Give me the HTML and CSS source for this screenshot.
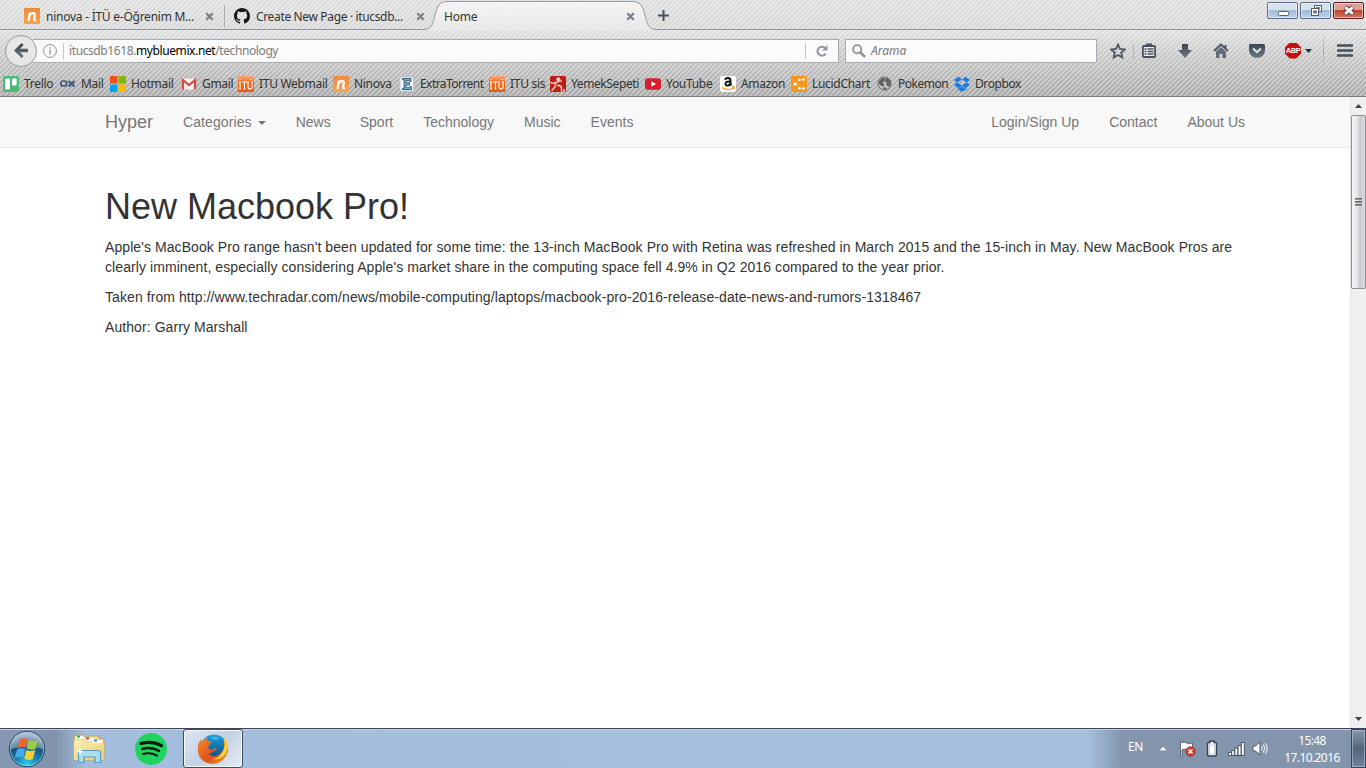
FILE: index.html
```html
<!DOCTYPE html>
<html lang="en">
<head>
<meta charset="utf-8">
<title>Home</title>
<link rel="stylesheet" href="styles.css">
</head>
<body>
<svg class="defs" width="0" height="0">
  <defs>
    <linearGradient id="tabFill" x1="0" y1="0" x2="0" y2="1"><stop offset="0" stop-color="#fafafa" stop-opacity=".75"/><stop offset="1" stop-color="#f1f1f1" stop-opacity=".6"/></linearGradient>
    <linearGradient id="orange" x1="0" y1="0" x2="0" y2="1"><stop offset="0" stop-color="#f08b3c"/><stop offset="1" stop-color="#f9a34c"/></linearGradient>
    <linearGradient id="itu" x1="0" y1="0" x2="0" y2="1"><stop offset="0" stop-color="#f9a87c"/><stop offset=".4" stop-color="#f06a1c"/><stop offset="1" stop-color="#e8590c"/></linearGradient>
    <linearGradient id="slate" x1="0" y1="0" x2="0" y2="1"><stop offset="0" stop-color="#3b454f"/><stop offset="1" stop-color="#6c7986"/></linearGradient>
    <radialGradient id="orb" cx=".5" cy=".95" r=".9"><stop offset="0" stop-color="#2fd3f4"/><stop offset=".35" stop-color="#1583b5"/><stop offset=".65" stop-color="#1c4f7c"/><stop offset="1" stop-color="#9fb4c8"/></radialGradient>
    <linearGradient id="folder" x1="0" y1="0" x2="1" y2="1"><stop offset="0" stop-color="#fbf0b4"/><stop offset="1" stop-color="#ecca68"/></linearGradient>
    <linearGradient id="globe" x1="0" y1="0" x2="0" y2="1"><stop offset="0" stop-color="#1ba1d8"/><stop offset="1" stop-color="#123c80"/></linearGradient>
    <linearGradient id="fox" x1="0" y1="0" x2="1" y2="1"><stop offset="0" stop-color="#f6892a"/><stop offset=".6" stop-color="#e0501b"/><stop offset="1" stop-color="#f8a51c"/></linearGradient>
    <symbol id="i-ninova" viewBox="0 0 16 16"><rect width="16" height="16" fill="url(#orange)"/><path d="M4.500 13 6 4.500M5.400 7.500C8 4 11 4.500 10.800 7L10 11.200Q10 12.600 12 12" fill="none" stroke="#fff" stroke-width="2.300"/></symbol>
    <symbol id="i-itu" viewBox="0 0 16 16"><rect width="16" height="16" fill="url(#itu)"/><path d="M2 6v7M1 6h2M1 13h2M4 6h5M6.500 6v7M5.500 13h2M10 6v5q0 2 2 2t2-2V6M9.500 6h1.500M13 6h2M11.500 3.500h.8M13.500 3.500h.8M1.700 3.500h.8" fill="none" stroke="#fff" stroke-width="1.100"/></symbol>
    <symbol id="i-x" viewBox="0 0 9 9"><path d="M1.300 1.300 7.700 7.700M7.700 1.300 1.300 7.700" stroke="#77818b" stroke-width="2.300"/></symbol>
  </defs>
</svg>

<header class="chrome">
  <div class="tabs">
    <div class="tab tab-one">
      <svg class="fav" width="16" height="16"><use href="#i-ninova"/></svg>
      <span class="tab-label">ninova - İTÜ e-Öğrenim M...</span>
      <svg class="close" width="9" height="9"><use href="#i-x"/></svg>
    </div>
    <div class="tab tab-two">
      <svg class="fav" width="16" height="16" viewBox="0 0 16 16"><path fill="#16191c" d="M8 0C3.580 0 0 3.580 0 8c0 3.540 2.290 6.530 5.470 7.590.4.070.55-.17.55-.38v-1.490c-2.010.37-2.530-.49-2.690-.94-.09-.23-.48-.94-.82-1.130-.28-.15-.68-.52-.01-.53.63-.01 1.080.58 1.230.82.720 1.210 1.870.87 2.330.66.070-.52.28-.87.51-1.070-1.780-.2-3.640-.89-3.640-3.950 0-.87.31-1.590.82-2.150-.08-.2-.36-1.020.08-2.120 0 0 .67-.21 2.200.82a7.600 7.600 0 0 1 4 0c1.530-1.040 2.200-.82 2.200-.82.44 1.100.16 1.920.08 2.120.51.560.82 1.270.82 2.150 0 3.070-1.870 3.750-3.650 3.950.29.250.54.730.54 1.480v2.200c0 .21.15.46.55.38A8 8 0 0 0 16 8c0-4.420-3.580-8-8-8z"/></svg>
      <span class="tab-label">Create New Page · itucsdb...</span>
      <svg class="close" width="9" height="9"><use href="#i-x"/></svg>
    </div>
    <div class="tab tab-active">
      <svg class="tab-shape" width="238" height="30" viewBox="0 0 238 30"><path d="M0 29.500H4C12 29.500 13 23 15 15 17 6 20 1.500 27 1.500H212C220 1.500 223 6 225 15 227 23 228 29.500 236 29.500H238V30H0Z" fill="url(#tabFill)"/><path d="M0 29.500H4C12 29.500 13 23 15 15 17 6 20 1.500 27 1.500H212C220 1.500 223 6 225 15 227 23 228 29.500 236 29.500H238" fill="none" stroke="#959a9f"/></svg>
      <span class="tab-label">Home</span>
      <svg class="close" width="9" height="9"><use href="#i-x"/></svg>
    </div>
    <div class="tab-rest">
      <svg width="11" height="11" viewBox="0 0 11 11"><path d="M5.500 0v11M0 5.500h11" stroke="#47535f" stroke-width="2"/></svg>
      <div class="window-buttons">
        <span class="wb"><svg width="30" height="17" viewBox="0 0 30 17"><rect x="10.500" y="9.500" width="10" height="4" rx="1" fill="#fff" stroke="#56606c"/></svg></span>
        <span class="wb"><svg width="30" height="17" viewBox="0 0 30 17"><rect x="13.500" y="3.500" width="7" height="6" fill="#f4f7fa" stroke="#56606c"/><rect x="15.500" y="5.500" width="3" height="2" fill="#a0bbd6" stroke="#56606c" stroke-width=".7"/><rect x="10.500" y="6.500" width="7" height="7" fill="#fff" stroke="#56606c"/><rect x="12.800" y="9" width="2.500" height="2" fill="#6b8db0" stroke="#56606c" stroke-width=".9"/></svg></span>
        <span class="wb wb-close"><svg width="30" height="17" viewBox="0 0 30 17"><path d="m11 5 8 7m0-7-8 7" stroke="#684047" stroke-width="4.800"/><path d="m11.200 5.200 7.600 6.600m0-6.600-7.600 6.600" stroke="#fff" stroke-width="2.800"/></svg></span>
      </div>
    </div>
  </div>

  <div class="toolbar">
    <div class="back"><svg width="14" height="15" viewBox="0 0 14 15"><path d="M14 5.800H6L9.700 2.100 7.600 0 0 7.500 7.600 15 9.700 12.900 6 9.200H14Z" fill="url(#slate)"/></svg></div>
    <div class="urlbar">
      <svg class="info" width="14" height="14" viewBox="0 0 14 14"><circle cx="7" cy="7" r="6.400" fill="none" stroke="#939393"/><path d="M7 6v4.500M7 3.300v1.500" stroke="#939393" stroke-width="1.400"/></svg>
      <span class="vline"></span>
      <span class="url">itucsdb1618.<b>mybluemix.net</b>/technology</span>
      <span class="vline vline-end"></span>
      <svg width="12" height="12" viewBox="0 0 12 12"><path d="M9.800 8.500A4.500 4.500 0 1 1 9 2.800" fill="none" stroke="#8c99a5" stroke-width="2"/><path d="M11.500 0v5.500H6Z" fill="#8c99a5"/></svg>
    </div>
    <div class="search">
      <svg width="14" height="14" viewBox="0 0 14 14"><circle cx="5.200" cy="5.200" r="4.100" fill="none" stroke="#929292" stroke-width="1.900"/><path d="m8.300 8.300 4.700 4.700" stroke="#929292" stroke-width="2.500"/></svg>
      <span>Arama</span>
    </div>
    <div class="tools">
      <svg class="t-star" width="16" height="16" viewBox="0 0 16 16"><path d="m8 1.500 2 4.500 4.900.5-3.700 3.200 1.100 4.800L8 12l-4.300 2.500 1.100-4.800L1.100 6.500 6 6Z" fill="none" stroke="#4c5762" stroke-width="1.800"/></svg>
      <span class="vline tool-line"></span>
      <svg class="t-list" width="14" height="15" viewBox="0 0 14 15"><path d="M4.500 3V1h5v2" fill="#46515c" stroke="#46515c" stroke-width="1.200"/><rect x=".9" y="3" width="12.200" height="11" rx="1" fill="#eee" stroke="#46515c" stroke-width="1.800"/><path d="M2.500 6h2M5.500 6H11.500M2.500 8.500h2M5.500 8.500H11.500M2.500 11h2M5.500 11H11.500" stroke="#46515c" stroke-width="1.300"/></svg>
      <svg class="t-down" width="14" height="14" viewBox="0 0 14 14"><path d="M4 0h6v6h4l-7 8-7-8h4Z" fill="url(#slate)"/></svg>
      <svg class="t-home" width="16" height="15" viewBox="0 0 16 15"><path d="m1 8 7-6.500L15 8M12.500 2v3" fill="none" stroke="#46515c" stroke-width="1.800"/><path d="M3 8.600 8 4l5 4.600V15H9.500v-4h-3v4H3Z" fill="#626e79"/></svg>
      <svg class="t-pocket" width="16" height="14" viewBox="0 0 16 14"><path d="M1.500 0h13Q16 0 16 1.500V6A8 8 0 0 1 0 6V1.500Q0 0 1.500 0Z" fill="url(#slate)"/><path d="m4 4.500 4 3.800 4-3.800" fill="none" stroke="#e5e7e9" stroke-width="1.900"/></svg>
      <span class="abp">ABP</span>
      <svg class="t-caret" width="7" height="4" viewBox="0 0 7 4"><path d="M0 0h7L3.500 4Z" fill="#26313b"/></svg>
      <span class="tool-divider"></span>
      <svg class="t-menu" width="16" height="13" viewBox="0 0 16 13"><path d="M0 1.500h16M0 6.500h16M0 11.500h16" stroke="#46515c" stroke-width="2.600" stroke-linecap="butt"/></svg>
    </div>
  </div>

  <nav class="bookmarks">
    <a class="bm bm-trello"><svg width="16" height="16" viewBox="0 0 16 16"><rect width="16" height="16" rx="2" fill="#4bb978"/><rect x="2.300" y="2.500" width="4.600" height="11" rx=".7" fill="#fff"/><rect x="9" y="2.500" width="4.600" height="7" rx=".7" fill="#fff"/></svg><span>Trello</span></a>
    <a class="bm bm-mail"><svg width="16" height="16" viewBox="0 0 16 16"><rect x="1" y="5" width="5.600" height="5" rx="2" fill="none" stroke="#3a577c" stroke-width="1.700"/><path d="m8.500 5 6 5.500m0-5.500-6 5.500" stroke="#3a577c" stroke-width="1.900"/></svg><span>Mail</span></a>
    <a class="bm bm-hotmail"><svg width="16" height="16" viewBox="0 0 16 16"><path fill="#f25022" d="M0 0h7.500v7.500H0z"/><path fill="#7fba00" d="M8.500 0H16v7.500H8.500z"/><path fill="#00a4ef" d="M0 8.500h7.500V16H0z"/><path fill="#ffb900" d="M8.500 8.500H16V16H8.500z"/></svg><span>Hotmail</span></a>
    <a class="bm bm-gmail"><svg width="16" height="16" viewBox="0 0 16 16"><rect x="1" y="2.500" width="14" height="11" rx="1" fill="#f4f1f0"/><path d="M2 13.500V4l6 5 6-5v9.500" fill="none" stroke="#d54b3d" stroke-width="2.200"/></svg><span>Gmail</span></a>
    <a class="bm bm-webmail"><svg width="16" height="16"><use href="#i-itu"/></svg><span>ITU Webmail</span></a>
    <a class="bm bm-ninova"><svg width="16" height="16"><use href="#i-ninova"/></svg><span>Ninova</span></a>
    <a class="bm bm-extra"><svg width="16" height="16" viewBox="0 0 16 16"><rect x="1" y="1" width="13.500" height="14" fill="#f8fafb" stroke="#b9c5cd"/><path d="M3.500 2.500H12v3h-1.500L10 4.700H7v2.100h3.500v2.300H7v2.600h3.500l.5-1.200h1.500v3h-9v-1H5V3.700H3.500Z" fill="#6db4d8" stroke="#26485e" stroke-width=".8"/></svg><span>ExtraTorrent</span></a>
    <a class="bm bm-sis"><svg width="16" height="16"><use href="#i-itu"/></svg><span>ITU sis</span></a>
    <a class="bm bm-yemek"><svg width="16" height="16" viewBox="0 0 16 16"><rect width="16" height="16" rx="1.500" fill="#c01d12"/><circle cx="8.300" cy="3.200" r="2" fill="#e8d6d0"/><path d="M0 6.500Q4 8 6 6.500T12 5M5.500 7.500Q6 11 1.500 14.500M7 9.500q4-.5 4.500 2.500V16M14 13v3" fill="none" stroke="#e3c6c0" stroke-width="1.600"/></svg><span>YemekSepeti</span></a>
    <a class="bm bm-youtube"><svg width="16" height="16" viewBox="0 0 16 16"><rect y="2.300" width="16" height="11.400" rx="2.800" fill="#d3222a"/><path d="m6.300 5.300 4.700 2.700-4.700 2.700Z" fill="#fff"/></svg><span>YouTube</span></a>
    <a class="bm bm-amazon"><svg width="16" height="16" viewBox="0 0 16 16"><rect width="16" height="16" rx="2" fill="#fff"/><path d="M5 3.800Q5.500 2 8 2q2.500 0 2.500 2.500V8l1 1.500M10 5.500Q5.500 5.300 5.500 7.700T8 9.500q2-.3 2.300-2.500" fill="none" stroke="#111" stroke-width="1.900"/><path d="M2 11.500q6 4 11.500.500M12 11h2v2" fill="none" stroke="#f59a22" stroke-width="1.400"/></svg><span>Amazon</span></a>
    <a class="bm bm-lucid"><svg width="16" height="16" viewBox="0 0 16 16"><rect width="16" height="16" rx="1" fill="#f4971d"/><path d="M12 3.500H8.500L4 8l4.500 4.500H12M4 8h4" fill="none" stroke="#f8b660" stroke-width="1"/><g fill="#fff"><circle cx="12.500" cy="3.500" r="1.300"/><circle cx="8.500" cy="3.800" r="1.300"/><circle cx="4" cy="8" r="1.600"/><circle cx="8.500" cy="12.200" r="1.300"/><circle cx="12.500" cy="12.500" r="1.300"/></g></svg><span>LucidChart</span></a>
    <a class="bm bm-pokemon"><svg width="16" height="16" viewBox="0 0 16 16"><circle cx="7.500" cy="7.500" r="6.500" fill="#c5c7c8" stroke="#6c6f71"/><path d="m1.500 5.500 4-4 3 1-1 3-2 1 2 2-1 2-3-1-2-2ZM9 1.500l4 2.500 1 4-2 3-3-2 1-2-2-1ZM6 11.500h3l1 2-3 .5Z" fill="#606466"/></svg><span>Pokemon</span></a>
    <a class="bm bm-dropbox"><svg width="16" height="16" viewBox="0 0 16 16"><path d="m4.700.8 3.300 2.700-4.800 3L0 3.900Zm6.600 0L16 3.900l-3.200 2.600-4.800-3ZM3.200 6.500 8 9.400l-3.300 2.800L0 9.100Zm9.600 0L16 9.100l-4.700 3.100L8 9.400ZM3.300 12l1.400 1L8 10.300l3.300 2.700 1.400-1v1.200L8 15.700l-4.700-2.500Z" fill="#147ae5"/></svg><span>Dropbox</span></a>
  </nav>
</header>

<div class="viewport">
  <div class="page">
    <nav class="navbar">
      <a class="brand">Hyper</a>
      <div class="nav-left"><a>Categories <i class="caret"></i></a><a>News</a><a>Sport</a><a>Technology</a><a>Music</a><a>Events</a></div>
      <div class="nav-right"><a>Login/Sign Up</a><a>Contact</a><a>About Us</a></div>
    </nav>
    <main>
      <h1>New Macbook Pro!</h1>
      <p>Apple's MacBook Pro range hasn't been updated for some time: the 13-inch MacBook Pro with Retina was refreshed in March 2015 and the 15-inch in May. New MacBook Pros are clearly imminent, especially considering Apple's market share in the computing space fell 4.9% in Q2 2016 compared to the year prior.</p>
      <p>Taken from http://www.techradar.com/news/mobile-computing/laptops/macbook-pro-2016-release-date-news-and-rumors-1318467</p>
      <p>Author: Garry Marshall</p>
    </main>
  </div>
  <div class="scrollbar">
    <span class="arrow"><svg width="7" height="4" viewBox="0 0 7 4"><path d="M0 4h7L3.500 0Z" fill="#444"/></svg></span>
    <div class="thumb"><i></i><i></i><i></i></div>
    <span class="arrow arrow-down"><svg width="7" height="4" viewBox="0 0 7 4"><path d="M0 0h7L3.500 4Z" fill="#444"/></svg></span>
  </div>
</div>

<footer class="taskbar">
  <svg class="start" width="38" height="38" viewBox="0 0 38 38"><circle cx="19" cy="19" r="17.700" fill="url(#orb)" stroke="#31495f"/><circle cx="19" cy="19" r="16.600" fill="none" stroke="#a7dbea" stroke-opacity=".7"/><path d="M3 19Q2 4 19 3 36 4 35 19 19 14 3 19Z" fill="#dfe9f2" opacity=".35"/><path d="M12 9.500Q16 7 19.500 9.500l-2 8.500Q14 16 9.500 18Z" fill="#f0652a"/><path d="M20.700 10Q25 12.500 30 10l-2.500 9Q23 20.500 18.800 18.500Z" fill="#9dcb45"/><path d="M9.200 19.300Q13.500 17.200 17.200 19.500l-2.200 8.500Q11.500 26 6.800 28Z" fill="#4aa9e9"/><path d="M18.400 20Q22 22 27.200 20L24.800 29Q20 31 16.200 28.500Z" fill="#fdcf37"/></svg>
  <svg class="explorer" width="34" height="32" viewBox="0 0 34 32"><path d="M2 4 4 2h8l1 2h4l1-1h8l1 3h5v21H2Z" fill="#f5e298" stroke="#c8a64b"/><path d="M4 3h7v3H4ZM13 5h9v3h-9ZM21 7h9v3h-9Z" fill="#fff"/><path d="M5 2.500h3v2H5Z" fill="#18b33c"/><path d="M14 4.500h3v2h-3Z" fill="#d84b2b"/><path d="M22 6.500h3v2h-3Z" fill="#348cd0"/><path d="M2 8h10l1 2h8l1 1h10v16H2Z" fill="url(#folder)"/><path d="M6.500 29.500V20q0-2.500 2.500-2.500h17q2.500 0 2.500 2.500v9.500h-5.500V24h-11v5.500Z" fill="#a9def0" stroke="#559cc4" stroke-width="1.200"/><path d="m8 14 1 3.500 3 1-3 1-1 3.500-1-3.500-3-1 3-1Z" fill="#f5ffff"/></svg>
  <svg class="spotify" width="32" height="32" viewBox="0 0 32 32"><circle cx="16" cy="16" r="16" fill="#1ed45f"/><g fill="none" stroke="#09150d" stroke-linecap="round"><path d="M6 10.500q11-3 20.500 2.200" stroke-width="3.100"/><path d="M7.300 16q9-2.500 16.700 1.900" stroke-width="2.500"/><path d="M8 21q7.500-2 14 1.600" stroke-width="2.100"/></g></svg>
  <div class="task-active"><svg width="32" height="32" viewBox="0 0 32 32"><circle cx="17" cy="15" r="13.500" fill="url(#globe)"/><path d="M27 5q5 6 4 13-3 12-15 13Q3 30 1 19 0 11 4 6l1 3q3-4 7-5-2 2-2 4h4q2 1-1 3l-2 3q1 3 4 3l4-2q2 2-2 3-3 3-6 2 5 6 12 1 6-5 3-16Z" fill="url(#fox)"/><path d="M26 4q4 10-2 17-4 5-9 5 13 2 16-11Q31 8 26 4Z" fill="#fbd13c"/><path d="M13 5q5-3 10 0l-4 2-4-1Z" fill="#53c4e8" opacity=".7"/></svg></div>
  <div class="tray">
    <span class="lang">EN</span>
    <svg class="up" width="8" height="5" viewBox="0 0 8 5"><path d="M0 4.700 4 .3l4 4.400Z" fill="#fff" stroke="#52647a" stroke-width=".4"/></svg>
    <svg class="flag" width="17" height="17" viewBox="0 0 17 17"><path d="M1.500 1v15.500H3V10q3-2 5 0 3 1.500 5.500-.5V3q-3 1.500-5.500 0-3-1.500-5-.2V1Z" fill="#fff" stroke="#4a5563" stroke-width=".8"/><circle cx="11.500" cy="11.500" r="4.800" fill="#d33b2c" stroke="#912c26" stroke-width=".6"/><path d="m9.500 9.500 4 4m0-4-4 4" stroke="#fff" stroke-width="1.500"/></svg>
    <svg class="battery" width="12" height="17" viewBox="0 0 12 17"><path d="M4 2.500V1h4v1.500h1.500l1 1V14q0 2-2 2h-5q-2 0-2-2V3.500l1-1Z" fill="#f8fbff" stroke="#374453" stroke-width="1.500"/><path d="M3.500 5h5v9h-5Z" fill="#fff" stroke="#9aa7b5" stroke-width=".5"/></svg>
    <svg class="signal" width="17" height="14" viewBox="0 0 17 14"><g fill="#fff" stroke="#3f4d5e" stroke-width=".9"><rect x=".5" y="10.500" width="3" height="3"/><rect x="3.700" y="8.500" width="3" height="5"/><rect x="6.900" y="6" width="3" height="7.500"/><rect x="10.100" y="3.500" width="3" height="10"/><rect x="13.300" y=".5" width="3" height="13"/></g></svg>
    <svg class="speaker" width="16" height="15" viewBox="0 0 16 15"><path d="M1 5h2.500L8 1v13l-4.500-4H1Z" fill="#fff" stroke="#43515f" stroke-width=".9"/><path d="M9.500 5.500q1.500 2 0 4M11.300 3.500q3 4 0 8M13.200 2q4 5.500 0 11" fill="none" stroke="#fff" stroke-width="1"/></svg>
    <div class="clock"><span>15:48</span><span>17.10.2016</span></div>
    <span class="show-desktop"></span>
  </div>
</footer>
</body>
</html>
```
FILE: styles.css
```css
* { box-sizing: border-box; }
body { margin: 0; width: 1366px; height: 768px; overflow: hidden; display: flex; flex-direction: column; background: #fff; font-family: "Noto Sans", sans-serif; font-size: 12px; color: #333; }
svg { display: block; flex: none; }
.defs { position: absolute; }

/* Browser chrome */
.chrome { height: 97px; flex: none; border-bottom: 1px solid #7f7f7f; background: repeating-linear-gradient(135deg, rgba(255,255,255,.38) 0 1px, transparent 1.5px 3.1px, rgba(255,255,255,.38) 3.535px), linear-gradient(#dedede 0, #d8d8d8 29px, #e0e0e0 30px, #d2d2d2 45px, #a9a9a9 96px); }
.tabs { display: flex; height: 30px; }
.tab { display: flex; align-items: center; height: 30px; padding-top: 3px; border-bottom: 1px solid #8f969d; white-space: nowrap; }
.tab-one { width: 225px; padding-left: 24px; background: linear-gradient(#a9abad, #a9abad) 224px 5px / 1px 22px no-repeat; }
.tab-two { width: 195px; padding-left: 9px; }
.tab-label { margin-left: 6px; width: 154px; letter-spacing: -.25px; }
.tab-two .tab-label { width: 155px; flex: none; letter-spacing: -.35px; }
.close { margin-left: 5px; }
.tab-active { position: relative; width: 238px; padding: 2px 0 0 24px; border: 0; }
.tab-shape { position: absolute; left: 0; top: 0; }
.tab-active .tab-label { position: relative; margin: 0; width: 182px; letter-spacing: -.2px; }
.tab-active .close { position: relative; margin: 0; }
.tab-rest { flex: 1; display: flex; align-items: center; height: 30px; padding: 2px 2px 0 0; border-bottom: 1px solid #8f969d; }
.window-buttons { margin-left: auto; display: flex; gap: 2px; align-self: flex-start; }
.wb { width: 31px; height: 17px; border: 1px solid #596d88; border-radius: 2px; background: linear-gradient(#d4e2f0 0 45%, #a0bbd6 50%, #bdd3e8); display: flex; align-items: center; justify-content: center; box-shadow: inset 0 0 0 1px rgba(255,255,255,.5); }
.wb-close { border-color: #5c1d1f; background: linear-gradient(#e0a094 0 45%, #c1422e 50%, #d27560); }

.toolbar { height: 41px; display: flex; align-items: center; }
.back { position: relative; z-index: 1; margin-left: 5px; width: 32px; height: 32px; flex: none; border: 1px solid #989a9c; border-radius: 50%; background: rgba(232,232,232,.95); display: flex; align-items: center; justify-content: center; }
.urlbar { width: 806px; margin-left: -4px; height: 24px; padding-left: 10px; border: 1px solid #a6abb1; border-left: 0; background: rgba(253,253,253,.93); display: flex; align-items: center; color: #7d7d7d; }
.vline { width: 1px; height: 16px; margin-left: 6px; background: #c4c6c8; }
.url { margin-left: 5px; letter-spacing: -.4px; width: 736px; }
.url b { font-weight: 400; color: #000; }
.vline-end { margin: 0 10px 0 0; }
.search { width: 252px; height: 24px; margin-left: 6px; padding-left: 6px; border: 1px solid #a6abb1; background: rgba(253,253,253,.93); display: flex; align-items: center; color: #777; font-style: italic; }
.search span { margin-left: 5px; }
.tools { display: flex; align-items: center; height: 41px; flex: 1; }
.t-star { margin-left: 13px; }
.tool-line { margin-left: 7px; background: #b4b6b8; }
.t-list { margin-left: 8px; }
.t-down { margin-left: 22px; }
.t-home { margin-left: 21px; }
.t-pocket { margin-left: 20px; }
.abp { margin-left: 20px; width: 16px; height: 16px; clip-path: polygon(30% 0, 70% 0, 100% 30%, 100% 70%, 70% 100%, 30% 100%, 0 70%, 0 30%); background: #c70d0d; color: #fff; font: 700 7.500px/16px "Liberation Sans", sans-serif; text-align: center; letter-spacing: -.4px; }
.t-caret { margin-left: 4px; }
.tool-divider { width: 1px; height: 40px; margin-left: 11px; background: linear-gradient(transparent, #a7a7a7, transparent); }
.t-menu { margin-left: 13px; }

.bookmarks { display: flex; height: 25px; padding-left: 3px; }
.bm { display: flex; align-items: center; height: 25px; white-space: nowrap; flex: none; letter-spacing: -.3px; }
.bm span { margin-left: 5px; }
.bm-trello { width: 57px; }
.bm-mail { width: 50px; }
.bm-hotmail { width: 71px; }
.bm-gmail { width: 57px; }
.bm-webmail { width: 95px; }
.bm-ninova { width: 66px; }
.bm-extra { width: 90px; letter-spacing: -.55px; }
.bm-sis { width: 61px; }
.bm-yemek { width: 95px; letter-spacing: -.4px; }
.bm-youtube { width: 75px; }
.bm-amazon { width: 71px; }
.bm-lucid { width: 86px; }
.bm-pokemon { width: 77px; letter-spacing: -.5px; }
.bm-dropbox { letter-spacing: -.4px; }

/* Web page */
.viewport { height: 631px; display: flex; }
.page { width: 1350px; font: 14px/20px "Liberation Sans", Arial, sans-serif; }
.navbar { height: 51px; padding: 0 90px 0 105px; display: flex; background: #f8f8f8; border-bottom: 1px solid #e7e7e7; color: #777; }
.navbar a { padding: 15px; display: block; white-space: nowrap; }
.navbar .brand { padding: 15px 15px 15px 0; font-size: 18px; }
.nav-left, .nav-right { display: flex; }
.nav-left a:first-child { letter-spacing: .1px; }
.nav-left a:nth-child(2) { padding-right: 14px; }
.nav-right { margin-left: auto; }
.caret { display: inline-block; margin-left: 2px; vertical-align: middle; border: 4px solid transparent; border-top-color: #777; border-bottom: 0; }
main { padding: 39px 105px 0; }
h1 { margin: 0 0 10px; font-size: 36px; line-height: 40px; font-weight: 400; }
main p { margin: 0 0 10px; letter-spacing: .078px; }
.scrollbar { width: 16px; display: flex; flex-direction: column; background: #f0f0f0; border-left: 1px solid #e6e6e6; }
.arrow { height: 18px; display: flex; align-items: center; justify-content: center; }
.arrow-down { margin-top: auto; }
.thumb { height: 174px; width: 15px; border: 1px solid #8f8f93; border-radius: 2px; background: linear-gradient(90deg, #f7f7f8, #e4e4e6 45%, #c8c8ce 60%, #dcdce0); display: flex; flex-direction: column; align-items: center; justify-content: center; gap: 1px; }
.thumb i { width: 7px; height: 2px; background: linear-gradient(#555, #aaa); }

/* Taskbar */
.taskbar { height: 40px; display: flex; align-items: center; border-top: 1px solid #3d4455; box-shadow: inset 0 1px #c3d2e5; background: linear-gradient(90deg, #8799b2 0, #8193ac 55px, #a4bddc 85px, #a6c0df 1080px, #a6c0df 1087px, #8395ad 1122px, #8395ad); }
.start { margin-left: 8px; }
.explorer { margin-left: 26px; }
.spotify { margin-left: 29px; }
.task-active { margin-left: 16px; width: 60px; height: 39px; border: 1px solid #3d4a60; border-radius: 3px; background: linear-gradient(135deg, #dde6f1, #c3d1e3 50%, #e4ecf5); box-shadow: inset 0 0 0 1px #f6f9fc; display: flex; align-items: center; justify-content: center; }
.tray { margin-left: auto; display: flex; align-items: center; height: 39px; color: #fff; }
.lang { width: 16px; margin-bottom: 5px; letter-spacing: -.3px; }
.up { margin-left: 15px; }
.flag { margin-left: 12px; }
.battery { margin-left: 10px; }
.signal { margin-left: 10px; }
.speaker { margin-left: 7px; }
.clock { margin-left: 16px; width: 56px; display: flex; flex-direction: column; align-items: center; line-height: 17px; letter-spacing: -.6px; white-space: nowrap; }
.show-desktop { width: 15px; height: 39px; margin-left: 11px; border: 1px solid #39465a; background: linear-gradient(#8897aa, #54657b 50%, #71849c); box-shadow: inset 0 0 0 1px rgba(200,215,235,.5); }
```
